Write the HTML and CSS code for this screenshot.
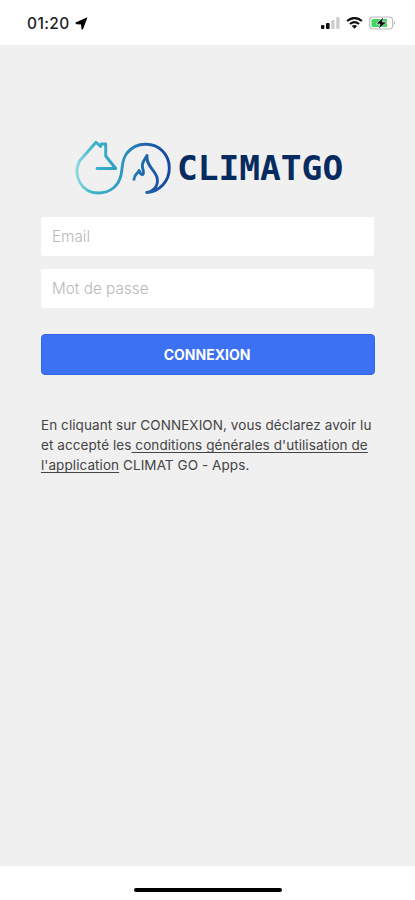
FILE: index.html
```html
<!DOCTYPE html>
<html lang="fr">
<head>
<meta charset="utf-8">
<title>Climatgo</title>
<link rel="stylesheet" href="styles.css">
</head>
<body>
<header class="status">
  <div class="clock"><span class="time">01:20</span>
    <svg width="13" height="13" viewBox="0 0 13 13"><path d="M12.500.3 0 5.800l1.500 1.500 4.500.2.500 4.500 1.300.8z"/></svg>
  </div>
  <div class="indicators">
    <svg class="signal" width="19" height="12" viewBox="0 0 19 12"><rect y="8" width="3.4" height="4" rx="1"/><rect x="5" y="6" width="3.6" height="6" rx="1"/><rect class="off" x="10.2" y="3" width="3.4" height="9" rx="1"/><rect class="off" x="15.2" width="3.4" height="12" rx="1"/></svg>
    <svg class="wifi" width="17" height="12" viewBox="0 0 17 12"><path d="M1.1 4Q8.5-2 15.900 4M3.900 7Q8.500 3.300 13.100 7"/><path class="dot" d="M5.800 9q2.700-2 5.400 0l-2.700 2.800z"/></svg>
    <svg class="battery" width="27" height="14" viewBox="0 0 27 14"><rect class="case" x=".7" y="1" width="23" height="12" rx="3.500"/><path class="charge" d="M4 3h14v8H4q-1.500 0-1.500-1.500v-5Q2.500 3 4 3z"/><path class="tip" d="M25 5q2 2 0 4z"/><path class="bolt" d="M14.500 1 7 8h4l-1.500 5L18 6h-4.500z"/></svg>
  </div>
</header>
<main class="login">
  <div class="brand">
    <svg class="logo" width="98" height="60" viewBox="0 0 98 60">
      <defs><linearGradient id="tone" gradientUnits="userSpaceOnUse" x1="3" y1="0" x2="96" y2="0"><stop offset="0" stop-color="#8edbe3"/><stop offset=".18" stop-color="#3db4ca"/><stop offset=".48" stop-color="#2b9bc0"/><stop offset=".72" stop-color="#2068ae"/><stop offset="1" stop-color="#1647a0"/></linearGradient></defs>
      <path stroke="url(#tone)" d="M24 32.500H42.700L32.700 20V8H28.200L27.500 10.500 23 6.300 6.500 25C-1 40 9 57 25 57 38 57 46 49 48 39 50 31 48 25 54 17A24 24 0 0 1 73 8.300C86 8.300 96.300 18.500 96.300 32 96.300 45 87 55.500 73.700 56.500 82 55 86.500 48 83.500 40 80.500 33 73 29 74 19.500 71 24 68 28 70 33.500 71 38 70 40 67.500 37.500L66 34.500C65 38 61.500 37 61 43.300"/>
    </svg>
    <h1 class="name">CLIMATGO</h1>
  </div>
  <form class="form">
    <input class="field" type="email" placeholder="Email">
    <input class="field" type="password" placeholder="Mot de passe">
    <button class="submit" type="button">CONNEXION</button>
  </form>
  <p class="terms">En cliquant sur CONNEXION, vous déclarez avoir lu<br>et accepté les<u> conditions générales d'utilisation de</u><br><u>l'application</u> CLIMAT GO - Apps.</p>
</main>
<footer class="bottom"><div class="handle"></div></footer>
</body>
</html>
```
FILE: styles.css
```css
* { box-sizing: border-box; }
body {
  margin: 0;
  height: 900px;
  display: flex;
  flex-direction: column;
  background: #fff;
  font-family: Inter, "Liberation Sans", sans-serif;
  overflow: hidden;
}
.status {
  height: 45px;
  padding: 0 19px 0 27px;
  display: flex;
  justify-content: space-between;
}
.clock { display: flex; height: 46px; align-items: center; gap: 5px; }
.time { font-size: 15.500px; font-weight: 500; letter-spacing: .4px; color: #222; }
.indicators { display: flex; height: 46px; align-items: center; gap: 6px; }
.signal { fill: #111; }
.signal .off { fill: #cecece; }
.wifi path { fill: none; stroke: #111; stroke-width: 2.200; }
.wifi .dot { fill: #111; stroke: none; }
.case { fill: #fff; stroke: #bbb; stroke-width: 1.200; }
.charge { fill: #3fd75f; }
.tip { fill: #aaa; }
.bolt { fill: #111; stroke: #fff; stroke-width: .6; }
.login {
  flex: 1;
  background: #f0f0f0;
  padding: 91px 40px 0;
}
.brand { display: flex; height: 64px; margin-left: 33px; }
.logo { flex: none; }
.logo path { fill: none; stroke-width: 2.900; stroke-linejoin: round; stroke-linecap: round; }
.name {
  margin: 11px 0 0 6px;
  font: bold 34.500px/42px "DejaVu Sans Mono", monospace;
  color: #062b61;
}
.form { display: flex; flex-direction: column; padding-top: 17px; }
.field {
  width: 333px;
  height: 39px;
  margin: 0 0 13px 1px;
  padding: 0 11px;
  border: 0;
  border-radius: 3px;
  background: #fff;
  font: 300 15.300px Inter, sans-serif;
}
.field::placeholder { color: #b8b8b8; opacity: 1; }
.submit {
  height: 41px;
  margin: 13px 0 0 1px;
  padding: 0 2px 1px 0;
  border: 1px solid #2f66e5;
  border-radius: 4px;
  background: #3c71f3;
  color: #fff;
  font: 700 14px Inter, sans-serif;
}
.terms {
  margin: 40px 0 0 1px;
  font-size: 13.500px;
  letter-spacing: .075px;
  line-height: 20px;
  color: #444;
  white-space: nowrap;
}
.terms u { text-underline-offset: 2px; text-decoration-thickness: 1px; text-decoration-skip-ink: none; }
.bottom { height: 34px; display: flex; justify-content: center; padding-top: 22px; }
.handle { width: 148px; height: 4px; border-radius: 2px; background: #000; }
```
